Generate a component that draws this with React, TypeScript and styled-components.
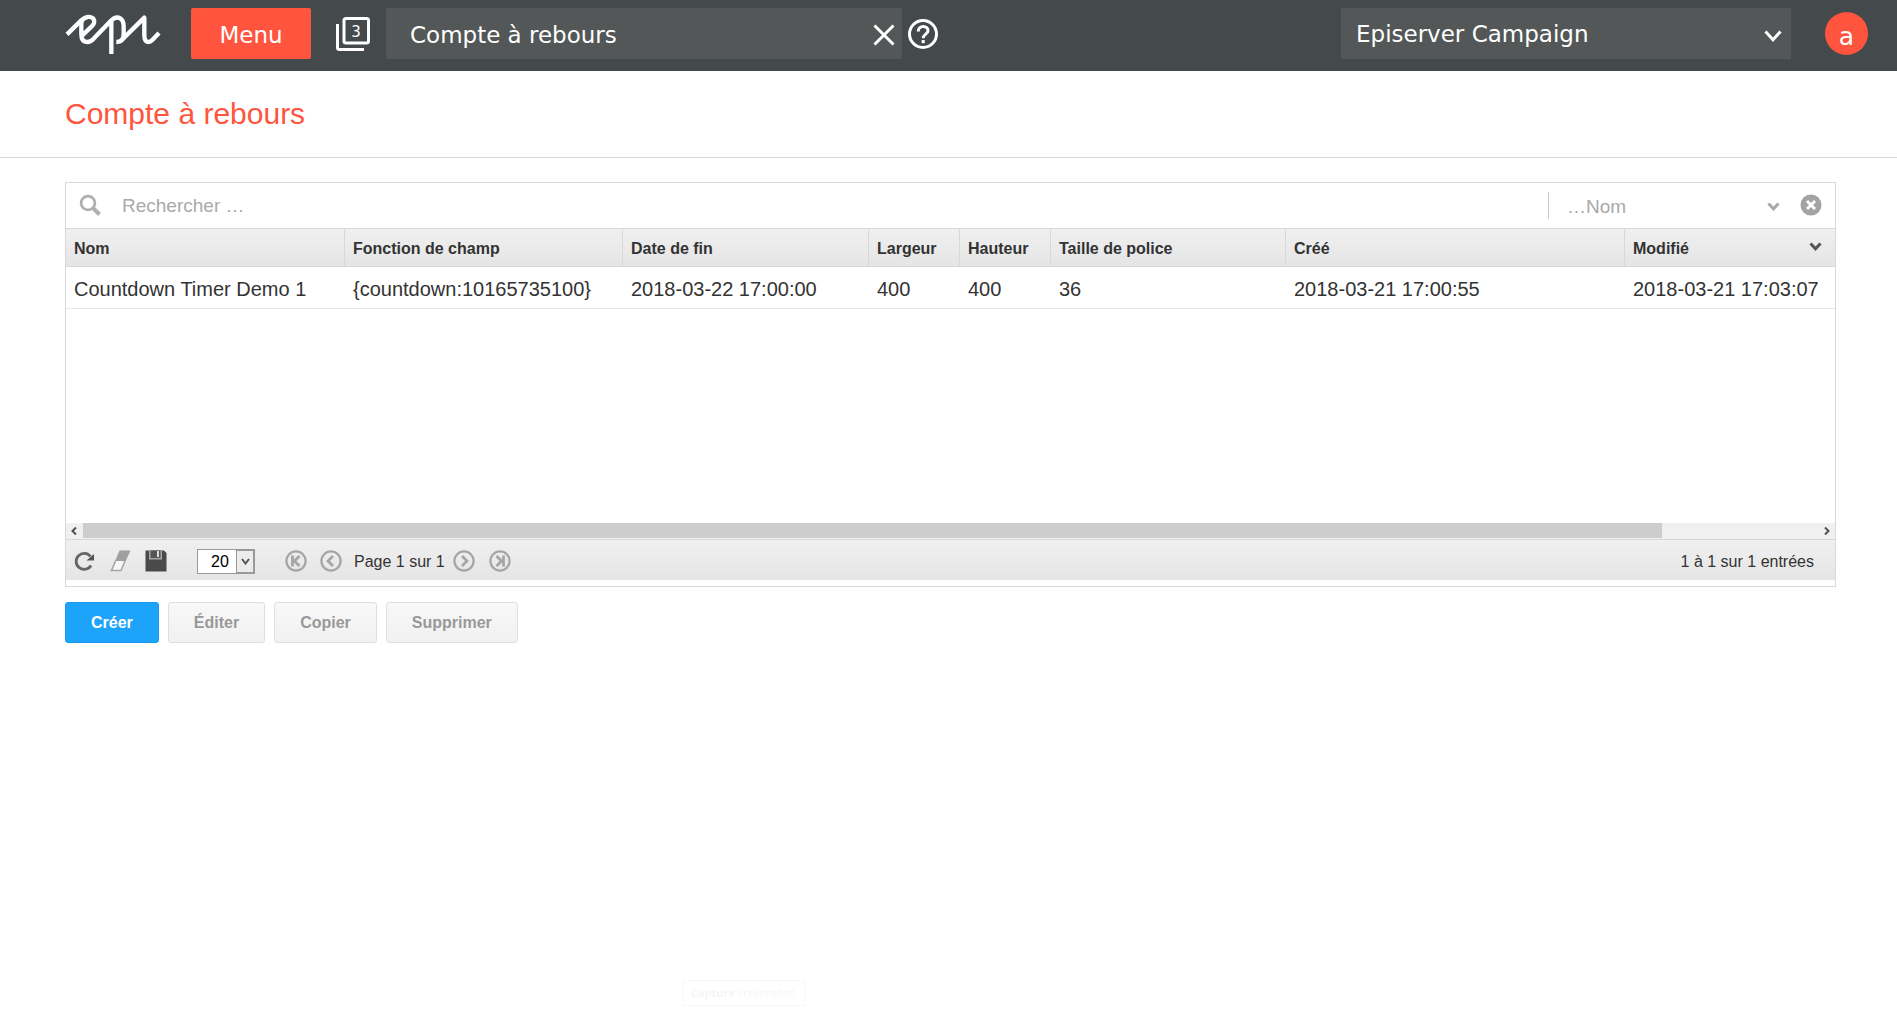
import React from "react";
import styled, { createGlobalStyle } from "styled-components";

const GlobalStyle = createGlobalStyle`
  * { box-sizing: border-box; }
  body {
    margin: 0;
    background: #fff;
    color: #333;
    font-family: Arial, "Liberation Sans", sans-serif;
  }
  button, input, select { font: inherit; color: inherit; margin: 0; }
  button { cursor: pointer; }
`;

const uiFont = `"DejaVu Sans", Verdana, sans-serif`;

const TopBar = styled.header`
  display: flex;
  align-items: center;
  height: 71px;
  padding: 8px 29px 12px 65px;
  background: #44494b;
  color: #fff;
  font-family: ${uiFont};
  font-size: 23px;
`;

const LogoLink = styled.a`
  display: flex;
  margin-right: 30px;
  padding-top: 2px;
`;

const MenuButton = styled.button`
  width: 120px;
  height: 51px;
  margin-right: 25px;
  padding: 2px 0 0;
  border: 0;
  border-radius: 2px;
  background: #ff553e;
`;

const IconButton = styled.button<{ $gap?: number }>`
  display: flex;
  align-items: center;
  justify-content: center;
  flex: none;
  margin-right: ${(p) => p.$gap ?? 0}px;
  padding: 0;
  border: 0;
  background: none;
`;

const TabsIcon = styled.span`
  display: grid;
  place-items: center;
  width: 34px;
  height: 34px;

  & > * { grid-area: 1 / 1; }
`;

const TabsCount = styled.span`
  padding: 0 0 4px 6px;
  font-size: 15px;
  line-height: 16px;
`;

const PageTab = styled.div`
  display: flex;
  align-items: center;
  justify-content: space-between;
  flex: 0 1 516px;
  height: 51px;
  margin-right: 6px;
  padding: 2px 7px 0 24px;
  background: #535757;
`;

const ClientPicker = styled.div`
  position: relative;
  flex: 0 1 450px;
  margin: 0 34px 0 auto;

  svg {
    position: absolute;
    right: 9px;
    top: 22px;
    pointer-events: none;
  }
`;

const ClientSelect = styled.select`
  display: block;
  width: 100%;
  height: 51px;
  padding: 0 40px 0 15px;
  border: 0;
  border-radius: 0;
  background: #535757;
  appearance: none;
`;

const Avatar = styled.button`
  width: 43px;
  height: 43px;
  padding: 6px 0 0;
  border: 0;
  border-radius: 50%;
  background: #ff553e;
  font-size: 25px;
  line-height: 32px;
`;

const TitleBand = styled.div`
  padding: 25px 65px 26px;
  border-bottom: 1px solid #d8d8d8;
`;

const Title = styled.h1`
  margin: 0;
  color: #ff553e;
  font-size: 30px;
  font-weight: 400;
  line-height: 35px;
`;

const Content = styled.main`
  padding: 24px 61px 0 65px;
`;

const Panel = styled.section`
  padding-bottom: 6px;
  border: 1px solid #d8d8d8;
`;

const SearchRow = styled.div`
  display: flex;
  align-items: center;
  height: 45px;
  padding: 0 13px 1px;
  color: #a9a9a9;
  font-size: 19px;
`;

const SearchInput = styled.input`
  flex: 1;
  min-width: 0;
  padding: 2px 0 0;
  margin-left: 21px;
  border: 0;
  outline: 0;
  background: none;

  &::placeholder { color: #a9a9a9; opacity: 1; }
`;

const FieldPicker = styled.div`
  position: relative;
  width: 252px;
  border-left: 1px solid #ccc;

  svg {
    position: absolute;
    right: 20px;
    top: 10px;
    pointer-events: none;
  }
`;

const FieldSelect = styled.select`
  display: block;
  width: 100%;
  height: 27px;
  padding: 2px 40px 0 18px;
  border: 0;
  background: none;
  appearance: none;
`;

const GridArea = styled.div`
  min-height: 295px;
`;

const Table = styled.table`
  width: 100%;
  border-collapse: separate;
  border-spacing: 0;
  table-layout: fixed;
`;

const Col = styled.col<{ $width?: number }>`
  width: ${(p) => (p.$width ? `${p.$width}px` : "auto")};
`;

const HeadCell = styled.th`
  height: 39px;
  padding: 2px 7px 0 8px;
  border: solid #d8d8d8;
  border-width: 1px 1px 1px 0;
  background: linear-gradient(#f0f0f0, #e5e5e5);
  font-size: 16px;
  font-weight: 700;
  text-align: left;
  white-space: nowrap;

  &:last-child { border-right: 0; }
`;

const SortButton = styled.button`
  display: flex;
  align-items: center;
  justify-content: space-between;
  width: 100%;
  padding: 0 6px 0 0;
  border: 0;
  background: none;

  svg { margin-bottom: 5px; }
`;

const Cell = styled.td`
  height: 42px;
  padding: 3px 7px 0 8px;
  border-bottom: 1px solid #e8e8e8;
  font-size: 20px;
  line-height: 24px;
  white-space: nowrap;
`;

const ScrollBar = styled.div`
  display: flex;
  height: 17px;
  background: #f0f0f0;
  border-bottom: 1px solid #d8d8d8;
`;

const ScrollArrow = styled.button<{ $side: "left" | "right" }>`
  display: flex;
  align-items: center;
  justify-content: ${(p) => (p.$side === "left" ? "flex-start" : "flex-end")};
  width: 17px;
  padding: 0 4px;
  border: 0;
  background: none;
`;

const ScrollTrack = styled.div`
  flex: 1;
`;

const ScrollThumb = styled.div`
  width: 91%;
  height: 15px;
  background: #cdcdcd;
`;

const Toolbar = styled.div`
  display: flex;
  align-items: center;
  height: 40px;
  padding: 2px 21px 0 7px;
  background: linear-gradient(#f0f0f0, #e5e5e5);
  font-size: 16px;
`;

const PageSize = styled.div`
  position: relative;
  margin: 0 30px 0 15px;

  span {
    position: absolute;
    top: 1px;
    right: 1px;
    bottom: 1px;
    display: flex;
    align-items: center;
    justify-content: center;
    width: 18px;
    border: 1px solid #999;
    background: #ececec;
    pointer-events: none;
  }
`;

const PageSizeSelect = styled.select`
  display: block;
  width: 58px;
  height: 25px;
  padding: 0 20px 0 13px;
  border: 1px solid #999;
  border-radius: 0;
  background: #fff;
  color: #000;
  appearance: none;
`;

const PageLabel = styled.span`
  margin-right: 8px;
  padding-top: 2px;
`;

const Summary = styled.span`
  margin-left: auto;
  padding-top: 2px;
`;

const Actions = styled.div`
  display: flex;
  gap: 9px;
  margin-top: 15px;
`;

const ActionButton = styled.button<{ $primary?: boolean }>`
  height: 41px;
  padding: 0 25px;
  border: 1px solid ${(p) => (p.$primary ? "#1a98ee" : "#dfdfdf")};
  border-radius: 3px;
  background: ${(p) => (p.$primary ? "#1ea3fb" : "linear-gradient(#f8f8f8, #f1f1f1)")};
  color: ${(p) => (p.$primary ? "#fff" : "#999")};
  font-size: 16px;
  font-weight: 700;
`;

const Hint = styled.div`
  position: fixed;
  bottom: 10px;
  left: 36%;
  padding: 3px 7px;
  border: 1px solid #f7f7f7;
  color: #f5f5f8;
  font-family: "Open Sans", "Noto Sans", sans-serif;
  font-size: 11px;
  line-height: 18px;
`;

const Chevron = ({ width, height, color, stroke = 3 }: {
  width: number; height: number; color: string; stroke?: number;
}) => (
  <svg width={width} height={height} viewBox={`0 0 ${width} ${height}`} aria-hidden="true">
    <path
      d={`M${stroke / 2} ${stroke / 2} L${width / 2} ${height - stroke * 0.75} L${width - stroke / 2} ${stroke / 2}`}
      fill="none" stroke={color} strokeWidth={stroke}
    />
  </svg>
);

const ScrollGlyph = ({ flip }: { flip?: boolean }) => (
  <svg width="8" height="8" viewBox="0 0 8 8" aria-hidden="true">
    <path d={flip ? "M2 0.5 L5.5 4 L2 7.5" : "M6 0.5 L2.5 4 L6 7.5"} fill="none" stroke="#505050" strokeWidth="2" />
  </svg>
);

const Pager = ({ d }: { d: string }) => (
  <svg width="22" height="22" viewBox="0 0 22 22" fill="none" stroke="#a6a6a6" strokeWidth="2.8" aria-hidden="true">
    <circle cx="11" cy="11" r="9.6" strokeWidth="2.3" />
    <path d={d} />
  </svg>
);

const Logo = () => (
  <svg width="96" height="43" viewBox="75 42 288 129" fill="none" stroke="#fff" strokeWidth="13" strokeLinejoin="round" aria-hidden="true">
    <path d="M81 106 L123 65 C137 51 151 52 158 57 C166 64 163 74 157 80 L127 109" />
    <path d="M143 54 C128 57 124 66 124 75 L124 106 C124 124 133 129 142 129 C151 129 156 125 162 118 L212 66 C224 53 234 54 241 58 C249 63 251 71 251 82 L251 105 C251 121 243 129 229 129" />
    <path d="M214 66 V165" />
    <path d="M247 121 L313 56 V108 C313 126 319 129 325 129 C330 129 333 127 337 123 L357 102" />
  </svg>
);

const columns: { label: string; width?: number; value: string }[] = [
  { label: "Nom", width: 279, value: "Countdown Timer Demo 1" },
  { label: "Fonction de champ", width: 278, value: "{countdown:10165735100}" },
  { label: "Date de fin", width: 246, value: "2018-03-22 17:00:00" },
  { label: "Largeur", width: 91, value: "400" },
  { label: "Hauteur", width: 91, value: "400" },
  { label: "Taille de police", width: 235, value: "36" },
  { label: "Créé", width: 339, value: "2018-03-21 17:00:55" },
  { label: "Modifié", value: "2018-03-21 17:03:07" },
];

export default function App() {
  return (
    <>
      <GlobalStyle />
      <TopBar>
        <LogoLink href="#" aria-label="Episerver"><Logo /></LogoLink>
        <MenuButton>Menu</MenuButton>
        <IconButton $gap={16}>
          <TabsIcon>
            <svg width="34" height="34" viewBox="0 0 34 34" fill="none" stroke="#fff" strokeWidth="3" aria-hidden="true">
              <rect x="8" y="1.5" width="24.5" height="24.5" rx="2" />
              <path d="M1.5 7 V30.5 Q1.5 32.5 3.5 32.5 H28" />
            </svg>
            <TabsCount>3</TabsCount>
          </TabsIcon>
        </IconButton>
        <PageTab>
          <span>Compte à rebours</span>
          <IconButton aria-label="Fermer">
            <svg width="22" height="22" viewBox="0 0 22 22" stroke="#fff" strokeWidth="3" aria-hidden="true">
              <path d="M1.5 1.5 L20.5 20.5 M20.5 1.5 L1.5 20.5" />
            </svg>
          </IconButton>
        </PageTab>
        <IconButton aria-label="Aide">
          <svg width="30" height="30" viewBox="0 0 30 30" fill="none" stroke="#fff" strokeWidth="3" aria-hidden="true">
            <circle cx="15" cy="15" r="13.5" />
            <path d="M10.3 12.5 C10.3 9.5 12.3 7.5 15.2 7.5 C18.2 7.5 20 9.3 20 11.7 C20 15 15.2 15.3 15.2 19.3" />
            <path d="M15.2 21 V24.2" />
          </svg>
        </IconButton>
        <ClientPicker>
          <ClientSelect aria-label="Client" defaultValue="campaign">
            <option value="campaign">Episerver Campaign</option>
          </ClientSelect>
          <Chevron width={18} height={12} color="#fff" />
        </ClientPicker>
        <Avatar>a</Avatar>
      </TopBar>

      <TitleBand><Title>Compte à rebours</Title></TitleBand>

      <Content>
        <Panel>
          <SearchRow>
            <svg width="22" height="22" viewBox="0 0 22 22" fill="none" stroke="#b0b0b0" aria-hidden="true">
              <circle cx="9" cy="9" r="6.9" strokeWidth="2.8" />
              <path d="M14 14 L20.5 20.5" strokeWidth="4" />
            </svg>
            <SearchInput type="text" aria-label="Rechercher" placeholder="Rechercher …" />
            <FieldPicker>
              <FieldSelect aria-label="Champ de recherche" defaultValue="nom">
                <option value="nom">…Nom</option>
              </FieldSelect>
              <Chevron width={13} height={9} color="#a9a9a9" />
            </FieldPicker>
            <IconButton aria-label="Effacer la recherche">
              <svg width="22" height="22" viewBox="0 0 22 22" aria-hidden="true">
                <circle cx="11" cy="11" r="10.5" fill="#a3a3a3" />
                <path d="M7 7 L15 15 M15 7 L7 15" stroke="#fff" strokeWidth="3" />
              </svg>
            </IconButton>
          </SearchRow>

          <GridArea>
            <Table>
              <colgroup>
                {columns.map((c) => <Col key={c.label} $width={c.width} />)}
              </colgroup>
              <thead>
                <tr>
                  {columns.map((c) => (
                    <HeadCell key={c.label} scope="col">
                      {c.label === "Modifié" ? (
                        <SortButton>
                          {c.label}
                          <Chevron width={13} height={9} color="#555" />
                        </SortButton>
                      ) : c.label}
                    </HeadCell>
                  ))}
                </tr>
              </thead>
              <tbody>
                <tr>
                  {columns.map((c) => <Cell key={c.label}>{c.value}</Cell>)}
                </tr>
              </tbody>
            </Table>
          </GridArea>

          <ScrollBar>
            <ScrollArrow $side="left" aria-label="Défiler à gauche"><ScrollGlyph /></ScrollArrow>
            <ScrollTrack><ScrollThumb /></ScrollTrack>
            <ScrollArrow $side="right" aria-label="Défiler à droite"><ScrollGlyph flip /></ScrollArrow>
          </ScrollBar>

          <Toolbar>
            <IconButton aria-label="Actualiser" $gap={15}>
              <svg width="22" height="22" viewBox="0 0 22 22" aria-hidden="true">
                <path d="M17.5 6.5 A8 8 0 1 0 18 15.5" fill="none" stroke="#666" strokeWidth="2.8" />
                <path d="M21 4 V10.5 H13.5 Z" fill="#555" />
              </svg>
            </IconButton>
            <IconButton aria-label="Gommer" $gap={13}>
              <svg width="22" height="22" viewBox="0 0 22 22" aria-hidden="true">
                <path d="M9.5 0.5 H20.5 L15.5 11.5 H4.8 Z" fill="#a0a0a0" />
                <path d="M5.5 11 L1.5 20.5 H11 L15 11" fill="#f6f6f6" stroke="#a6a6a6" strokeWidth="1.6" />
              </svg>
            </IconButton>
            <IconButton aria-label="Enregistrer" $gap={15}>
              <svg width="22" height="22" viewBox="0 0 22 22" aria-hidden="true">
                <path d="M0.5 0.5 H19 L21.5 3 V21.5 H0.5 Z" fill="#4a4a4a" />
                <path d="M4 0.5 H17 V9.5 H4 Z" fill="#a8a8a8" />
                <path d="M5.5 0.5 H15.5 V8 H5.5 Z" fill="#555" />
                <path d="M12 1 H14 V7 H12 Z" fill="#ddd" />
              </svg>
            </IconButton>
            <PageSize>
              <PageSizeSelect aria-label="Entrées par page" defaultValue="20">
                <option>20</option>
              </PageSizeSelect>
              <span><Chevron width={9} height={7} color="#555" stroke={2} /></span>
            </PageSize>
            <IconButton aria-label="Première page" $gap={13}>
              <Pager d="M7.5 5.5 V16.5 M14.5 6 L9.5 11 L14.5 16" />
            </IconButton>
            <IconButton aria-label="Page précédente" $gap={12}>
              <Pager d="M13 6 L8 11 L13 16" />
            </IconButton>
            <PageLabel>Page 1 sur 1</PageLabel>
            <IconButton aria-label="Page suivante" $gap={14}>
              <Pager d="M9 6 L14 11 L9 16" />
            </IconButton>
            <IconButton aria-label="Dernière page">
              <Pager d="M14.5 5.5 V16.5 M7.5 6 L12.5 11 L7.5 16" />
            </IconButton>
            <Summary>1 à 1 sur 1 entrées</Summary>
          </Toolbar>
        </Panel>

        <Actions>
          <ActionButton $primary>Créer</ActionButton>
          <ActionButton>Éditer</ActionButton>
          <ActionButton>Copier</ActionButton>
          <ActionButton>Supprimer</ActionButton>
        </Actions>
      </Content>
      <Hint><b>Capture</b> screenshot.</Hint>
    </>
  );
}
